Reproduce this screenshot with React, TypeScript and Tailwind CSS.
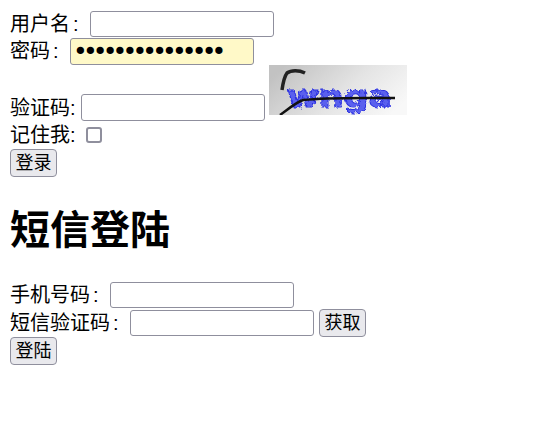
const field = "block shrink-0 w-[184px] bg-white border border-[#8f8f9d] rounded-[3px] px-0.5 text-[20px] outline-none";
const btn = "block shrink-0 w-[47px] h-[28px] bg-[#e9e9ed] border border-[#8f8f9d] rounded-[4px] text-center text-[18px] leading-[27px] text-black";

function Captcha() {
  return (
    <svg width="138" height="50" viewBox="0 0 138 50" className="block shrink-0 ml-1 mb-[6px]">
      <defs>
        <linearGradient id="captchaBg" x1="0" y1="0.3" x2="1" y2="0.7">
          <stop offset="0" stopColor="#c2c2c2" />
          <stop offset="0.55" stopColor="#e4e4e4" />
          <stop offset="1" stopColor="#f8f8f8" />
        </linearGradient>
        <filter id="fuzz" x="-5%" y="-5%" width="110%" height="110%">
          <feTurbulence type="fractalNoise" baseFrequency="0.35" numOctaves="2" seed="4" />
          <feDisplacementMap in="SourceGraphic" scale="5" />
        </filter>
      </defs>
      <rect width="138" height="50" fill="url(#captchaBg)" />
      <g filter="url(#fuzz)">
        <text x="18" y="42" fontFamily="'DejaVu Sans', sans-serif" fontSize="31" fontWeight="700" fill="#5a60ee" stroke="#2a30e0" strokeWidth="1" textLength="105" lengthAdjust="spacingAndGlyphs">wnga</text>
      </g>
      <path d="M13 25 C14 18 15 12 18 8 C22 5 30 5 36 8" fill="none" stroke="#222" strokeWidth="3.5" />
      <path d="M11 50 C18 45 26 38 34 35 C60 32 100 33 126 33" fill="none" stroke="#111" strokeWidth="2.5" />
    </svg>
  );
}

export default function App() {
  return (
    <div className="pl-[10px] pt-[11px] text-[20px] leading-[26px] text-black bg-white min-h-[432px] font-['Liberation_Sans','Noto_Sans_CJK_SC',sans-serif]">
      <div className="flex h-[27px]">
        <span className="w-[80px]">用户名<span className="ml-[3px]">:</span></span>
        <input className={`${field} h-[26px]`} />
      </div>
      <div className="flex h-[27px]">
        <span className="w-[60px]">密码<span className="ml-[3px]">:</span></span>
        <input
          type="password"
          defaultValue="123456789012345"
          className="block shrink-0 w-[184px] h-[27px] bg-[#fff9c8] border border-[#8f8f9d] rounded-[3px] pl-[2px] text-[25px] tracking-[-4.85px] font-['DejaVu_Sans',sans-serif] outline-none"
        />
      </div>
      <div className="flex items-end h-[56px]">
        <span className="w-[71px]">验证码:</span>
        <input className={`${field} h-[27px]`} />
        <Captcha />
      </div>
      <div className="flex items-center h-[28px]">
        <span className="w-[76px]">记住我:</span>
        <input type="checkbox" className="appearance-none block w-4 h-4 bg-white border-2 border-[#8f8f9d] rounded-[3px]" />
      </div>
      <button className={btn}>登录</button>
      <h1 className="mt-[26px] mb-[25px] text-[40px] leading-[54px] font-bold">短信登陆</h1>
      <div className="flex h-[27px]">
        <span className="w-[100px]">手机号码<span className="ml-[3px]">:</span></span>
        <input className={`${field} h-[26px]`} />
      </div>
      <div className="flex items-center h-[28px]">
        <span className="w-[120px]">短信验证码<span className="ml-[3px]">:</span></span>
        <input className={`${field} h-[26px]`} />
        <button className={`${btn} ml-[5px]`}>获取</button>
      </div>
      <button className={btn}>登陆</button>
    </div>
  );
}
